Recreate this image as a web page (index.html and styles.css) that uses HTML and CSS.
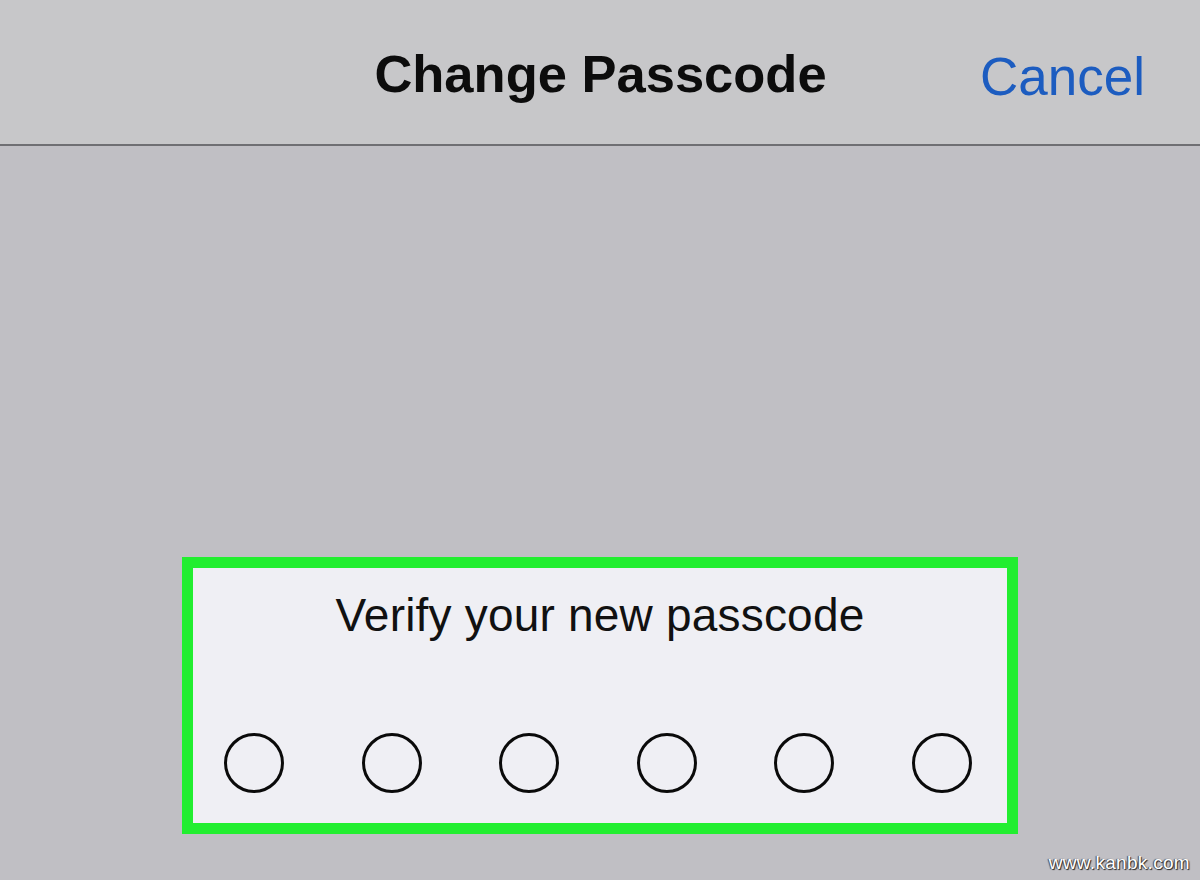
FILE: index.html
```html
<!DOCTYPE html>
<html>
<head>
<meta charset="utf-8">
<link rel="stylesheet" href="styles.css">
</head>
<body>
<div class="screen">
  <header class="navbar">
    <div class="title">Change Passcode</div>
    <div class="cancel">Cancel</div>
  </header>
  <main class="content">
    <div class="highlight">
      <div class="panel">
        <div class="prompt">Verify your new passcode</div>
        <div class="dots">
          <span class="dot"></span>
          <span class="dot"></span>
          <span class="dot"></span>
          <span class="dot"></span>
          <span class="dot"></span>
          <span class="dot"></span>
        </div>
      </div>
    </div>
  </main>
  <div class="watermark">www.kanbk.com</div>
</div>
</body>
</html>
```
FILE: styles.css
```css
html, body {
  margin: 0;
  padding: 0;
}
body {
  width: 1200px;
  height: 880px;
  overflow: hidden;
  font-family: "Liberation Sans", Arial, sans-serif;
  background: #c0bfc4;
}
.screen {
  position: relative;
  width: 1200px;
  height: 880px;
}
.navbar {
  position: relative;
  height: 146px;
  box-sizing: border-box;
  background: #c7c7c9;
  border-bottom: 2px solid #6f6f73;
  display: flex;
  align-items: center;
  justify-content: center;
}
.title {
  font-size: 52.5px;
  font-weight: bold;
  color: #0c0c0c;
  margin-top: 2px;
  margin-left: 1px;
}
.cancel {
  position: absolute;
  right: 55px;
  top: 46px;
  font-size: 53px;
  color: #1c5cc0;
}
.content {
  padding-top: 411px;
  padding-left: 182px;
}
.highlight {
  width: 836px;
  height: 277px;
  box-sizing: border-box;
  border: 11px solid #22ee30;
  background: #efeff4;
}
.panel {
  display: flex;
  flex-direction: column;
  align-items: center;
}
.prompt {
  margin-top: 20px;
  font-size: 46px;
  color: #111;
  letter-spacing: 0.2px;
}
.dots {
  align-self: flex-start;
  margin-top: 91px;
  margin-left: 31px;
  display: flex;
  gap: 77.6px;
}
.dot {
  width: 54px;
  height: 54px;
  border: 3px solid #0a0a0a;
  border-radius: 50%;
}
.watermark {
  position: absolute;
  right: 10px;
  bottom: 6px;
  font-size: 19px;
  color: #ffffff;
  text-shadow: 1px 1px 1px #222, -1px 0 1px #444;
  letter-spacing: 0.3px;
}
```
